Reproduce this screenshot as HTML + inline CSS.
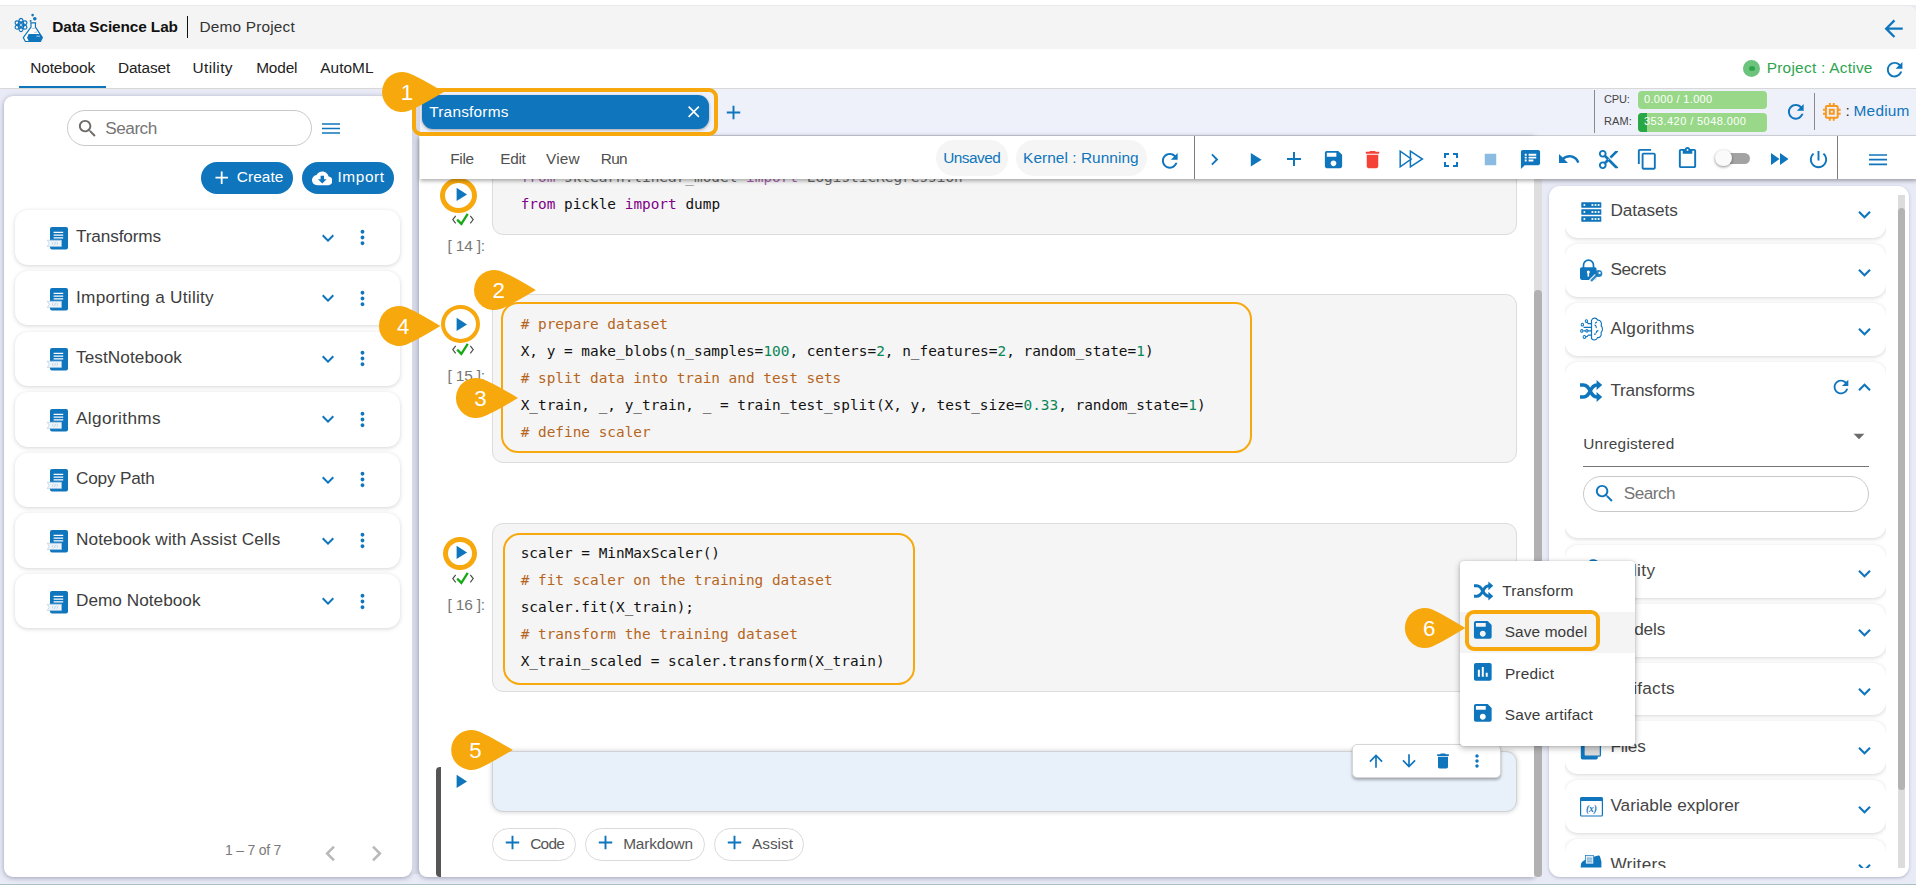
<!DOCTYPE html>
<html lang="en"><head><meta charset="utf-8"><title>Data Science Lab</title>
<style>
html,body{margin:0;padding:0}body{width:1916px;height:885px;overflow:hidden;position:relative;background:#e8eaf6;font-family:'Liberation Sans',sans-serif}
div,span,svg{box-sizing:border-box}
</style></head><body>
<div style="position:absolute;left:0px;top:0px;width:1916px;height:5px;background:#fff"></div>
<div style="position:absolute;left:0px;top:5px;width:1916px;height:44px;background:#f4f4f4;border-top:1px solid #e9e9e9;border-radius:0 7px 0 0"></div>
<svg style="position:absolute;left:14px;top:13px;overflow:visible;" width="30" height="30" viewBox="0 0 30 30"><g fill="none" stroke="#0f75bc" stroke-width="1.15"><ellipse cx="7" cy="12" rx="2.5" ry="6.6"/><ellipse cx="7" cy="12" rx="2.5" ry="6.6" transform="rotate(60 7 12)"/><ellipse cx="7" cy="12" rx="2.5" ry="6.6" transform="rotate(120 7 12)"/><circle cx="7" cy="12" r="1.5"/></g><circle cx="18.6" cy="2.1" r="1.3" fill="#0f75bc"/><circle cx="20.8" cy="5.8" r="1.8" fill="#0f75bc"/><circle cx="16.6" cy="8" r="1" fill="#0f75bc"/><path d="M16.2 9.8h6M17 9.8v4.4L9.3 24.6l2.1 3.9h15l2-3.9L21.4 14.2V9.8" fill="#fff" stroke="#0f75bc" stroke-width="1.2" stroke-linejoin="round"/><path d="M18.2 15.4h2.6M20.2 19.2h2.8" stroke="#b9c2cc" stroke-width="1"/><path d="M14.6 21.1h11.6l2.2 3.5-2 3.9H14.9l-1.8-3.7z" fill="#0f75bc"/><path d="M22.4 23.2h3.6" stroke="#9dc3e3" stroke-width="1.1"/></svg>
<span style="position:absolute;left:52.30px;top:17px;line-height:20px;white-space:pre;font-family:'Liberation Sans',sans-serif;font-size:15.4px;font-weight:700;color:#111;letter-spacing:-0.117px;">Data Science Lab</span>
<div style="position:absolute;left:187px;top:16px;width:1px;height:22px;background:#111"></div>
<span style="position:absolute;left:199.40px;top:17px;line-height:20px;white-space:pre;font-family:'Liberation Sans',sans-serif;font-size:15.4px;font-weight:400;color:#333;letter-spacing:0.197px;">Demo Project</span>
<svg style="position:absolute;left:1880.35px;top:14.65px;" width="27.3" height="27.3" viewBox="0 0 24 24"><path fill="#0f75bc" d="M20 11H7.83l5.59-5.59L12 4l-8 8 8 8 1.41-1.41L7.83 13H20v-2z"/></svg>
<div style="position:absolute;left:0px;top:49px;width:1916px;height:40px;background:#fff;border-bottom:1px solid #d8d8d8"></div>
<span style="position:absolute;left:30.30px;top:58px;line-height:20px;white-space:pre;font-family:'Liberation Sans',sans-serif;font-size:15.4px;font-weight:400;color:#222;letter-spacing:-0.149px;">Notebook</span>
<span style="position:absolute;left:117.90px;top:58px;line-height:20px;white-space:pre;font-family:'Liberation Sans',sans-serif;font-size:15.4px;font-weight:400;color:#222;letter-spacing:-0.107px;">Dataset</span>
<span style="position:absolute;left:192.60px;top:58px;line-height:20px;white-space:pre;font-family:'Liberation Sans',sans-serif;font-size:15.4px;font-weight:400;color:#222;letter-spacing:0.382px;">Utility</span>
<span style="position:absolute;left:256.20px;top:58px;line-height:20px;white-space:pre;font-family:'Liberation Sans',sans-serif;font-size:15.4px;font-weight:400;color:#222;letter-spacing:-0.164px;">Model</span>
<span style="position:absolute;left:320.30px;top:58px;line-height:20px;white-space:pre;font-family:'Liberation Sans',sans-serif;font-size:15.4px;font-weight:400;color:#222;letter-spacing:0.026px;">AutoML</span>
<div style="position:absolute;left:19px;top:86px;width:87px;height:2.4px;background:#0f75bc"></div>
<div style="position:absolute;left:1743px;top:60px;width:17px;height:17px;background:#6cc37c;border-radius:50%"></div>
<div style="position:absolute;left:1749px;top:66px;width:6px;height:5px;background:#2ea44f;border-radius:50%"></div>
<span style="position:absolute;left:1766.70px;top:58px;line-height:20px;white-space:pre;font-family:'Liberation Sans',sans-serif;font-size:15.4px;font-weight:400;color:#2da44e;letter-spacing:0.263px;">Project : Active</span>
<svg style="position:absolute;left:1882.95px;top:57.75px;" width="23.3" height="23.3" viewBox="0 0 24 24"><path fill="#0f75bc" d="M17.65 6.35C16.2 4.9 14.21 4 12 4c-4.42 0-7.99 3.58-7.99 8s3.57 8 7.99 8c3.73 0 6.84-2.55 7.73-6h-2.08c-.82 2.33-3.04 4-5.65 4-3.31 0-6-2.69-6-6s2.69-6 6-6c1.66 0 3.14.69 4.22 1.78L13 11h7V4l-2.35 2.35z"/></svg>
<div style="position:absolute;left:4px;top:96px;width:408px;height:781.3px;background:#fff;border-radius:9px;box-shadow:0 1px 5px rgba(40,44,80,.4)"></div>
<div style="position:absolute;left:67px;top:110px;width:245px;height:36px;border:1px solid #c9c9c9;border-radius:18px;background:#fff"></div>
<svg style="position:absolute;left:76.10px;top:116.80px;" width="23" height="23" viewBox="0 0 24 24"><path fill="#6f6a66" d="M15.5 14h-.79l-.28-.27C15.41 12.59 16 11.11 16 9.5 16 5.91 13.09 3 9.5 3S3 5.91 3 9.5 5.91 16 9.5 16c1.61 0 3.09-.59 4.23-1.57l.27.28v.79l5 4.99L20.49 19l-4.99-5zm-6 0C7.01 14 5 11.99 5 9.5S7.01 5 9.5 5 14 7.01 14 9.5 11.99 14 9.5 14z"/></svg>
<span style="position:absolute;left:105.30px;top:118px;line-height:20px;white-space:pre;font-family:'Liberation Sans',sans-serif;font-size:17.2px;font-weight:400;color:#757575;letter-spacing:-0.495px;">Search</span>
<svg style="position:absolute;left:321.5px;top:123.2px;overflow:visible;" width="18" height="11" viewBox="0 0 18 11"><path d="M0 1h18M0 5.5h18M0 10h18" stroke="#0f75bc" stroke-width="1.7"/></svg>
<div style="position:absolute;left:200.8px;top:162px;width:92.1px;height:32px;background:#0f75bc;border-radius:16px"></div>
<svg style="position:absolute;left:210.80px;top:167.20px;" width="21.4" height="21.4" viewBox="0 0 24 24"><path fill="#fff" d="M19 13h-6v6h-2v-6H5v-2h6V5h2v6h6v2z"/></svg>
<span style="position:absolute;left:236.80px;top:167px;line-height:20px;white-space:pre;font-family:'Liberation Sans',sans-serif;font-size:15.4px;font-weight:400;color:#fff;letter-spacing:0.083px;">Create</span>
<div style="position:absolute;left:302px;top:162px;width:92.1px;height:32px;background:#0f75bc;border-radius:16px"></div>
<svg style="position:absolute;left:311.80px;top:167.60px;" width="20.6" height="20.6" viewBox="0 0 24 24"><path fill="#fff" d="M19.35 10.04C18.67 6.59 15.64 4 12 4 9.11 4 6.6 5.64 5.35 8.04 2.34 8.36 0 10.91 0 14c0 3.31 2.69 6 6 6h13c2.76 0 5-2.24 5-5 0-2.64-2.05-4.78-4.65-4.96zM17 13l-5 5-5-5h3V9h4v4h3z"/></svg>
<span style="position:absolute;left:337.50px;top:167px;line-height:20px;white-space:pre;font-family:'Liberation Sans',sans-serif;font-size:15.4px;font-weight:400;color:#fff;letter-spacing:0.596px;">Import</span>
<div style="position:absolute;left:15px;top:210.3px;width:385px;height:54.5px;background:#fff;border-radius:13px;box-shadow:0 1px 4px rgba(0,0,0,.17)"></div>
<svg style="position:absolute;left:47px;top:226.9px;overflow:visible;" width="22" height="23" viewBox="0 0 22 23"><rect x="3" y="0" width="18" height="22.6" rx="2" fill="#0f75bc"/><path d="M6.6 5.3h9.6M6.6 8.1h9.6M6.6 10.9h9.6" stroke="#fff" stroke-width="1.25"/><path d="M0.2 13.2h14.3v6.4H0.2l2-3.2z" fill="#eef4f9" stroke="#a9cbe6" stroke-width=".6"/><path d="M6.3 15.2l-1.3 1.2 1.3 1.2M9.7 15.2l1.3 1.2-1.3 1.2M8.5 15l-1 2.8" fill="none" stroke="#9cbcd6" stroke-width=".6"/></svg>
<span style="position:absolute;left:76.00px;top:226px;line-height:20px;white-space:pre;font-family:'Liberation Sans',sans-serif;font-size:17.2px;font-weight:400;color:#3d3d3d;letter-spacing:-0.127px;">Transforms</span>
<svg style="position:absolute;left:315.50px;top:225.60px;" width="24" height="24" viewBox="0 0 24 24"><path fill="#0f75bc" d="M16.59 8.59L12 13.17 7.41 8.59 6 10l6 6 6-6z"/></svg>
<svg style="position:absolute;left:350.80px;top:226.00px;" width="23" height="23" viewBox="0 0 24 24"><path fill="#0f75bc" d="M12 8c1.1 0 2-.9 2-2s-.9-2-2-2-2 .9-2 2 .9 2 2 2zm0 2c-1.1 0-2 .9-2 2s.9 2 2 2 2-.9 2-2-.9-2-2-2zm0 6c-1.1 0-2 .9-2 2s.9 2 2 2 2-.9 2-2-.9-2-2-2z"/></svg>
<div style="position:absolute;left:15px;top:270.9px;width:385px;height:54.5px;background:#fff;border-radius:13px;box-shadow:0 1px 4px rgba(0,0,0,.17)"></div>
<svg style="position:absolute;left:47px;top:287.5px;overflow:visible;" width="22" height="23" viewBox="0 0 22 23"><rect x="3" y="0" width="18" height="22.6" rx="2" fill="#0f75bc"/><path d="M6.6 5.3h9.6M6.6 8.1h9.6M6.6 10.9h9.6" stroke="#fff" stroke-width="1.25"/><path d="M0.2 13.2h14.3v6.4H0.2l2-3.2z" fill="#eef4f9" stroke="#a9cbe6" stroke-width=".6"/><path d="M6.3 15.2l-1.3 1.2 1.3 1.2M9.7 15.2l1.3 1.2-1.3 1.2M8.5 15l-1 2.8" fill="none" stroke="#9cbcd6" stroke-width=".6"/></svg>
<span style="position:absolute;left:76.00px;top:287px;line-height:20px;white-space:pre;font-family:'Liberation Sans',sans-serif;font-size:17.2px;font-weight:400;color:#3d3d3d;letter-spacing:0.275px;">Importing a Utility</span>
<svg style="position:absolute;left:315.50px;top:286.20px;" width="24" height="24" viewBox="0 0 24 24"><path fill="#0f75bc" d="M16.59 8.59L12 13.17 7.41 8.59 6 10l6 6 6-6z"/></svg>
<svg style="position:absolute;left:350.80px;top:286.60px;" width="23" height="23" viewBox="0 0 24 24"><path fill="#0f75bc" d="M12 8c1.1 0 2-.9 2-2s-.9-2-2-2-2 .9-2 2 .9 2 2 2zm0 2c-1.1 0-2 .9-2 2s.9 2 2 2 2-.9 2-2-.9-2-2-2zm0 6c-1.1 0-2 .9-2 2s.9 2 2 2 2-.9 2-2-.9-2-2-2z"/></svg>
<div style="position:absolute;left:15px;top:331.5px;width:385px;height:54.5px;background:#fff;border-radius:13px;box-shadow:0 1px 4px rgba(0,0,0,.17)"></div>
<svg style="position:absolute;left:47px;top:348.1px;overflow:visible;" width="22" height="23" viewBox="0 0 22 23"><rect x="3" y="0" width="18" height="22.6" rx="2" fill="#0f75bc"/><path d="M6.6 5.3h9.6M6.6 8.1h9.6M6.6 10.9h9.6" stroke="#fff" stroke-width="1.25"/><path d="M0.2 13.2h14.3v6.4H0.2l2-3.2z" fill="#eef4f9" stroke="#a9cbe6" stroke-width=".6"/><path d="M6.3 15.2l-1.3 1.2 1.3 1.2M9.7 15.2l1.3 1.2-1.3 1.2M8.5 15l-1 2.8" fill="none" stroke="#9cbcd6" stroke-width=".6"/></svg>
<span style="position:absolute;left:76.00px;top:347px;line-height:20px;white-space:pre;font-family:'Liberation Sans',sans-serif;font-size:17.2px;font-weight:400;color:#3d3d3d;letter-spacing:0.074px;">TestNotebook</span>
<svg style="position:absolute;left:315.50px;top:346.80px;" width="24" height="24" viewBox="0 0 24 24"><path fill="#0f75bc" d="M16.59 8.59L12 13.17 7.41 8.59 6 10l6 6 6-6z"/></svg>
<svg style="position:absolute;left:350.80px;top:347.20px;" width="23" height="23" viewBox="0 0 24 24"><path fill="#0f75bc" d="M12 8c1.1 0 2-.9 2-2s-.9-2-2-2-2 .9-2 2 .9 2 2 2zm0 2c-1.1 0-2 .9-2 2s.9 2 2 2 2-.9 2-2-.9-2-2-2zm0 6c-1.1 0-2 .9-2 2s.9 2 2 2 2-.9 2-2-.9-2-2-2z"/></svg>
<div style="position:absolute;left:15px;top:392.1px;width:385px;height:54.5px;background:#fff;border-radius:13px;box-shadow:0 1px 4px rgba(0,0,0,.17)"></div>
<svg style="position:absolute;left:47px;top:408.7px;overflow:visible;" width="22" height="23" viewBox="0 0 22 23"><rect x="3" y="0" width="18" height="22.6" rx="2" fill="#0f75bc"/><path d="M6.6 5.3h9.6M6.6 8.1h9.6M6.6 10.9h9.6" stroke="#fff" stroke-width="1.25"/><path d="M0.2 13.2h14.3v6.4H0.2l2-3.2z" fill="#eef4f9" stroke="#a9cbe6" stroke-width=".6"/><path d="M6.3 15.2l-1.3 1.2 1.3 1.2M9.7 15.2l1.3 1.2-1.3 1.2M8.5 15l-1 2.8" fill="none" stroke="#9cbcd6" stroke-width=".6"/></svg>
<span style="position:absolute;left:76.00px;top:408px;line-height:20px;white-space:pre;font-family:'Liberation Sans',sans-serif;font-size:17.2px;font-weight:400;color:#3d3d3d;letter-spacing:0.381px;">Algorithms</span>
<svg style="position:absolute;left:315.50px;top:407.40px;" width="24" height="24" viewBox="0 0 24 24"><path fill="#0f75bc" d="M16.59 8.59L12 13.17 7.41 8.59 6 10l6 6 6-6z"/></svg>
<svg style="position:absolute;left:350.80px;top:407.80px;" width="23" height="23" viewBox="0 0 24 24"><path fill="#0f75bc" d="M12 8c1.1 0 2-.9 2-2s-.9-2-2-2-2 .9-2 2 .9 2 2 2zm0 2c-1.1 0-2 .9-2 2s.9 2 2 2 2-.9 2-2-.9-2-2-2zm0 6c-1.1 0-2 .9-2 2s.9 2 2 2 2-.9 2-2-.9-2-2-2z"/></svg>
<div style="position:absolute;left:15px;top:452.7px;width:385px;height:54.5px;background:#fff;border-radius:13px;box-shadow:0 1px 4px rgba(0,0,0,.17)"></div>
<svg style="position:absolute;left:47px;top:469.3px;overflow:visible;" width="22" height="23" viewBox="0 0 22 23"><rect x="3" y="0" width="18" height="22.6" rx="2" fill="#0f75bc"/><path d="M6.6 5.3h9.6M6.6 8.1h9.6M6.6 10.9h9.6" stroke="#fff" stroke-width="1.25"/><path d="M0.2 13.2h14.3v6.4H0.2l2-3.2z" fill="#eef4f9" stroke="#a9cbe6" stroke-width=".6"/><path d="M6.3 15.2l-1.3 1.2 1.3 1.2M9.7 15.2l1.3 1.2-1.3 1.2M8.5 15l-1 2.8" fill="none" stroke="#9cbcd6" stroke-width=".6"/></svg>
<span style="position:absolute;left:76.00px;top:468px;line-height:20px;white-space:pre;font-family:'Liberation Sans',sans-serif;font-size:17.2px;font-weight:400;color:#3d3d3d;letter-spacing:-0.196px;">Copy Path</span>
<svg style="position:absolute;left:315.50px;top:468.00px;" width="24" height="24" viewBox="0 0 24 24"><path fill="#0f75bc" d="M16.59 8.59L12 13.17 7.41 8.59 6 10l6 6 6-6z"/></svg>
<svg style="position:absolute;left:350.80px;top:468.40px;" width="23" height="23" viewBox="0 0 24 24"><path fill="#0f75bc" d="M12 8c1.1 0 2-.9 2-2s-.9-2-2-2-2 .9-2 2 .9 2 2 2zm0 2c-1.1 0-2 .9-2 2s.9 2 2 2 2-.9 2-2-.9-2-2-2zm0 6c-1.1 0-2 .9-2 2s.9 2 2 2 2-.9 2-2-.9-2-2-2z"/></svg>
<div style="position:absolute;left:15px;top:513.3px;width:385px;height:54.5px;background:#fff;border-radius:13px;box-shadow:0 1px 4px rgba(0,0,0,.17)"></div>
<svg style="position:absolute;left:47px;top:529.9px;overflow:visible;" width="22" height="23" viewBox="0 0 22 23"><rect x="3" y="0" width="18" height="22.6" rx="2" fill="#0f75bc"/><path d="M6.6 5.3h9.6M6.6 8.1h9.6M6.6 10.9h9.6" stroke="#fff" stroke-width="1.25"/><path d="M0.2 13.2h14.3v6.4H0.2l2-3.2z" fill="#eef4f9" stroke="#a9cbe6" stroke-width=".6"/><path d="M6.3 15.2l-1.3 1.2 1.3 1.2M9.7 15.2l1.3 1.2-1.3 1.2M8.5 15l-1 2.8" fill="none" stroke="#9cbcd6" stroke-width=".6"/></svg>
<span style="position:absolute;left:76.00px;top:529px;line-height:20px;white-space:pre;font-family:'Liberation Sans',sans-serif;font-size:17.2px;font-weight:400;color:#3d3d3d;letter-spacing:0.113px;">Notebook with Assist Cells</span>
<svg style="position:absolute;left:315.50px;top:528.60px;" width="24" height="24" viewBox="0 0 24 24"><path fill="#0f75bc" d="M16.59 8.59L12 13.17 7.41 8.59 6 10l6 6 6-6z"/></svg>
<svg style="position:absolute;left:350.80px;top:529.00px;" width="23" height="23" viewBox="0 0 24 24"><path fill="#0f75bc" d="M12 8c1.1 0 2-.9 2-2s-.9-2-2-2-2 .9-2 2 .9 2 2 2zm0 2c-1.1 0-2 .9-2 2s.9 2 2 2 2-.9 2-2-.9-2-2-2zm0 6c-1.1 0-2 .9-2 2s.9 2 2 2 2-.9 2-2-.9-2-2-2z"/></svg>
<div style="position:absolute;left:15px;top:573.9px;width:385px;height:54.5px;background:#fff;border-radius:13px;box-shadow:0 1px 4px rgba(0,0,0,.17)"></div>
<svg style="position:absolute;left:47px;top:590.5px;overflow:visible;" width="22" height="23" viewBox="0 0 22 23"><rect x="3" y="0" width="18" height="22.6" rx="2" fill="#0f75bc"/><path d="M6.6 5.3h9.6M6.6 8.1h9.6M6.6 10.9h9.6" stroke="#fff" stroke-width="1.25"/><path d="M0.2 13.2h14.3v6.4H0.2l2-3.2z" fill="#eef4f9" stroke="#a9cbe6" stroke-width=".6"/><path d="M6.3 15.2l-1.3 1.2 1.3 1.2M9.7 15.2l1.3 1.2-1.3 1.2M8.5 15l-1 2.8" fill="none" stroke="#9cbcd6" stroke-width=".6"/></svg>
<span style="position:absolute;left:76.00px;top:590px;line-height:20px;white-space:pre;font-family:'Liberation Sans',sans-serif;font-size:17.2px;font-weight:400;color:#3d3d3d;letter-spacing:0.023px;">Demo Notebook</span>
<svg style="position:absolute;left:315.50px;top:589.20px;" width="24" height="24" viewBox="0 0 24 24"><path fill="#0f75bc" d="M16.59 8.59L12 13.17 7.41 8.59 6 10l6 6 6-6z"/></svg>
<svg style="position:absolute;left:350.80px;top:589.60px;" width="23" height="23" viewBox="0 0 24 24"><path fill="#0f75bc" d="M12 8c1.1 0 2-.9 2-2s-.9-2-2-2-2 .9-2 2 .9 2 2 2zm0 2c-1.1 0-2 .9-2 2s.9 2 2 2 2-.9 2-2-.9-2-2-2zm0 6c-1.1 0-2 .9-2 2s.9 2 2 2 2-.9 2-2-.9-2-2-2z"/></svg>
<span style="position:absolute;left:225.00px;top:840px;line-height:20px;white-space:pre;font-family:'Liberation Sans',sans-serif;font-size:14px;font-weight:400;color:#7a7a7a;letter-spacing:-0.219px;">1 – 7 of 7</span>
<svg style="position:absolute;left:314.50px;top:837.50px;" width="31" height="31" viewBox="0 0 24 24"><path fill="#b9b9b9" d="M15.41 7.41L14 6l-6 6 6 6 1.41-1.41L10.83 12z"/></svg>
<svg style="position:absolute;left:361.10px;top:837.50px;" width="31" height="31" viewBox="0 0 24 24"><path fill="#b9b9b9" d="M10 6L8.59 7.41 13.17 12l-4.58 4.59L10 18l6-6z"/></svg>
<div style="position:absolute;left:412px;top:100px;width:7.5px;height:774px;background:#d7dae6"></div>
<div style="position:absolute;left:419.5px;top:89px;width:1497px;height:47px;background:#eef0fa;border-bottom:1px solid #d3d4da"></div>
<div style="position:absolute;left:422px;top:95px;width:287px;height:34px;background:#0f75bc;border-radius:11px;box-shadow:0 1px 3px rgba(0,0,0,.35)"></div>
<span style="position:absolute;left:429.20px;top:102px;line-height:20px;white-space:pre;font-family:'Liberation Sans',sans-serif;font-size:15.4px;font-weight:400;color:#fff;letter-spacing:0.225px;">Transforms</span>
<svg style="position:absolute;left:684.25px;top:101.95px;" width="19.5" height="19.5" viewBox="0 0 24 24"><path fill="#fff" d="M19 6.41L17.59 5 12 10.59 6.41 5 5 6.41 10.59 12 5 17.59 6.41 19 12 13.41 17.59 19 19 17.59 13.41 12z"/></svg>
<svg style="position:absolute;left:721.80px;top:101.00px;" width="23" height="23" viewBox="0 0 24 24"><path fill="#0f75bc" d="M19 13h-6v6h-2v-6H5v-2h6V5h2v6h6v2z"/></svg>
<div style="position:absolute;left:1594px;top:90px;width:1px;height:43px;background:#8a8a8a"></div>
<span style="position:absolute;left:1604.00px;top:89px;line-height:20px;white-space:pre;font-family:'Liberation Sans',sans-serif;font-size:11px;font-weight:400;color:#444;letter-spacing:-0.195px;">CPU:</span>
<span style="position:absolute;left:1604.00px;top:111px;line-height:20px;white-space:pre;font-family:'Liberation Sans',sans-serif;font-size:11px;font-weight:400;color:#444;letter-spacing:0.075px;">RAM:</span>
<div style="position:absolute;left:1638px;top:91px;width:129.3px;height:18px;background:#98d888;border-radius:4px"></div>
<div style="position:absolute;left:1638px;top:112.8px;width:129.3px;height:19px;background:#98d888;border-radius:4px;overflow:hidden"><div style="width:9px;height:19px;background:#28a745"></div></div>
<span style="position:absolute;left:1644.00px;top:89px;line-height:20px;white-space:pre;font-family:'Liberation Sans',sans-serif;font-size:11px;font-weight:400;color:#fff;letter-spacing:0.328px;">0.000 / 1.000</span>
<span style="position:absolute;left:1644.00px;top:111px;line-height:20px;white-space:pre;font-family:'Liberation Sans',sans-serif;font-size:11px;font-weight:400;color:#fff;letter-spacing:0.416px;">353.420 / 5048.000</span>
<svg style="position:absolute;left:1784.30px;top:99.80px;" width="23.6" height="23.6" viewBox="0 0 24 24"><path fill="#0f75bc" d="M17.65 6.35C16.2 4.9 14.21 4 12 4c-4.42 0-7.99 3.58-7.99 8s3.57 8 7.99 8c3.73 0 6.84-2.55 7.73-6h-2.08c-.82 2.33-3.04 4-5.65 4-3.31 0-6-2.69-6-6s2.69-6 6-6c1.66 0 3.14.69 4.22 1.78L13 11h7V4l-2.35 2.35z"/></svg>
<div style="position:absolute;left:1814px;top:93px;width:1px;height:37px;background:#8a8a8a"></div>
<svg style="position:absolute;left:1820.10px;top:99.70px;" width="23.6" height="23.6" viewBox="0 0 24 24"><path fill="#f8981d" d="M15 9H9v6h6V9zm-2 4h-2v-2h2v2zm8-2V9h-2V7c0-1.1-.9-2-2-2h-2V3h-2v2h-2V3H9v2H7c-1.1 0-2 .9-2 2v2H3v2h2v2H3v2h2v2c0 1.1.9 2 2 2h2v2h2v-2h2v2h2v-2h2c1.1 0 2-.9 2-2v-2h2v-2h-2v-2h2zm-4 6H7V7h10v10z"/></svg>
<span style="position:absolute;left:1845.60px;top:101px;line-height:20px;white-space:pre;font-family:'Liberation Sans',sans-serif;font-size:15.4px;font-weight:400;color:#333;letter-spacing:0.000px;">:</span>
<span style="position:absolute;left:1853.60px;top:101px;line-height:20px;white-space:pre;font-family:'Liberation Sans',sans-serif;font-size:15.4px;font-weight:400;color:#0f75bc;letter-spacing:0.208px;">Medium</span>
<div style="position:absolute;left:419.3px;top:136px;width:1115px;height:741.3px;background:#fff;border-radius:0 0 0 8px;box-shadow:0 1px 5px rgba(40,44,80,.4)"></div>
<div style="position:absolute;left:1534px;top:179px;width:7.5px;height:698px;background:#dedede"></div>
<div style="position:absolute;left:1534px;top:290px;width:7.5px;height:587px;background:#b1b1b1;border-radius:4px"></div>
<div style="position:absolute;left:492px;top:150px;width:1025px;height:84.5px;background:#f5f5f5;border:1px solid #dcdcdc;border-radius:11px;"></div>
<span style="position:absolute;left:520.70px;top:167px;line-height:20px;white-space:pre;font-family:'DejaVu Sans Mono','Liberation Mono',monospace;font-size:14.4px;font-weight:400;color:#800088;letter-spacing:0.000px;opacity:.62;">from</span>
<span style="position:absolute;left:555.38px;top:167px;line-height:20px;white-space:pre;font-family:'DejaVu Sans Mono','Liberation Mono',monospace;font-size:14.4px;font-weight:400;color:#111;letter-spacing:0.000px;opacity:.62;"> sklearn.linear_model </span>
<span style="position:absolute;left:746.11px;top:167px;line-height:20px;white-space:pre;font-family:'DejaVu Sans Mono','Liberation Mono',monospace;font-size:14.4px;font-weight:400;color:#800088;letter-spacing:0.000px;opacity:.62;">import</span>
<span style="position:absolute;left:798.12px;top:167px;line-height:20px;white-space:pre;font-family:'DejaVu Sans Mono','Liberation Mono',monospace;font-size:14.4px;font-weight:400;color:#111;letter-spacing:0.000px;opacity:.62;"> LogisticRegression</span>
<span style="position:absolute;left:520.70px;top:194px;line-height:20px;white-space:pre;font-family:'DejaVu Sans Mono','Liberation Mono',monospace;font-size:14.4px;font-weight:400;color:#800088;letter-spacing:0.000px;">from</span>
<span style="position:absolute;left:555.38px;top:194px;line-height:20px;white-space:pre;font-family:'DejaVu Sans Mono','Liberation Mono',monospace;font-size:14.4px;font-weight:400;color:#111;letter-spacing:0.000px;"> pickle </span>
<span style="position:absolute;left:624.73px;top:194px;line-height:20px;white-space:pre;font-family:'DejaVu Sans Mono','Liberation Mono',monospace;font-size:14.4px;font-weight:400;color:#800088;letter-spacing:0.000px;">import</span>
<span style="position:absolute;left:676.75px;top:194px;line-height:20px;white-space:pre;font-family:'DejaVu Sans Mono','Liberation Mono',monospace;font-size:14.4px;font-weight:400;color:#111;letter-spacing:0.000px;"> dump</span>
<div style="position:absolute;left:440.05px;top:178.1px;width:36.9px;height:34.8px;border:5.2px solid #f7a80d;border-radius:50%;background:#fff"></div>
<svg style="position:absolute;left:449.10px;top:183.10px;" width="22.8" height="22.8" viewBox="0 0 24 24"><path fill="#0f75bc" d="M8 5v14l11-7z"/></svg>
<svg style="position:absolute;left:451px;top:212.3px;overflow:visible;" width="24" height="14.6" viewBox="0 0 24 16"><path d="M4 4.2L0.8 8.3l3.2 4.1M20 4.2L23.2 8.3l-3.2 4.1" fill="none" stroke="#4a4a4a" stroke-width="1.25"/><path d="M5.6 8.4l4.6 4.6 7-11" fill="none" stroke="#17a817" stroke-width="2.5"/></svg>
<span style="position:absolute;left:447.60px;top:236px;line-height:20px;white-space:pre;font-family:'Liberation Sans',sans-serif;font-size:15.4px;font-weight:400;color:#767676;letter-spacing:-0.171px;">[ 14 ]:</span>
<div style="position:absolute;left:492px;top:294.3px;width:1025px;height:169px;background:#f5f5f5;border:1px solid #dcdcdc;border-radius:11px;"></div>
<div style="position:absolute;left:501px;top:302px;width:750.5px;height:150.5px;border:2.4px solid #f7a80d;border-radius:17px"></div>
<span style="position:absolute;left:520.70px;top:314px;line-height:20px;white-space:pre;font-family:'DejaVu Sans Mono','Liberation Mono',monospace;font-size:14.4px;font-weight:400;color:#b5651d;letter-spacing:0.000px;"># prepare dataset</span>
<span style="position:absolute;left:520.70px;top:341px;line-height:20px;white-space:pre;font-family:'DejaVu Sans Mono','Liberation Mono',monospace;font-size:14.4px;font-weight:400;color:#111;letter-spacing:0.000px;">X, y = make_blobs(n_samples=</span>
<span style="position:absolute;left:763.45px;top:341px;line-height:20px;white-space:pre;font-family:'DejaVu Sans Mono','Liberation Mono',monospace;font-size:14.4px;font-weight:400;color:#098658;letter-spacing:0.000px;">100</span>
<span style="position:absolute;left:789.45px;top:341px;line-height:20px;white-space:pre;font-family:'DejaVu Sans Mono','Liberation Mono',monospace;font-size:14.4px;font-weight:400;color:#111;letter-spacing:0.000px;">, centers=</span>
<span style="position:absolute;left:876.15px;top:341px;line-height:20px;white-space:pre;font-family:'DejaVu Sans Mono','Liberation Mono',monospace;font-size:14.4px;font-weight:400;color:#098658;letter-spacing:0.000px;">2</span>
<span style="position:absolute;left:884.82px;top:341px;line-height:20px;white-space:pre;font-family:'DejaVu Sans Mono','Liberation Mono',monospace;font-size:14.4px;font-weight:400;color:#111;letter-spacing:0.000px;">, n_features=</span>
<span style="position:absolute;left:997.52px;top:341px;line-height:20px;white-space:pre;font-family:'DejaVu Sans Mono','Liberation Mono',monospace;font-size:14.4px;font-weight:400;color:#098658;letter-spacing:0.000px;">2</span>
<span style="position:absolute;left:1006.19px;top:341px;line-height:20px;white-space:pre;font-family:'DejaVu Sans Mono','Liberation Mono',monospace;font-size:14.4px;font-weight:400;color:#111;letter-spacing:0.000px;">, random_state=</span>
<span style="position:absolute;left:1136.23px;top:341px;line-height:20px;white-space:pre;font-family:'DejaVu Sans Mono','Liberation Mono',monospace;font-size:14.4px;font-weight:400;color:#098658;letter-spacing:0.000px;">1</span>
<span style="position:absolute;left:1144.90px;top:341px;line-height:20px;white-space:pre;font-family:'DejaVu Sans Mono','Liberation Mono',monospace;font-size:14.4px;font-weight:400;color:#111;letter-spacing:0.000px;">)</span>
<span style="position:absolute;left:520.70px;top:368px;line-height:20px;white-space:pre;font-family:'DejaVu Sans Mono','Liberation Mono',monospace;font-size:14.4px;font-weight:400;color:#b5651d;letter-spacing:0.000px;"># split data into train and test sets</span>
<span style="position:absolute;left:520.70px;top:395px;line-height:20px;white-space:pre;font-family:'DejaVu Sans Mono','Liberation Mono',monospace;font-size:14.4px;font-weight:400;color:#111;letter-spacing:0.000px;">X_train, _, y_train, _ = train_test_split(X, y, test_size=</span>
<span style="position:absolute;left:1023.53px;top:395px;line-height:20px;white-space:pre;font-family:'DejaVu Sans Mono','Liberation Mono',monospace;font-size:14.4px;font-weight:400;color:#098658;letter-spacing:0.000px;">0.33</span>
<span style="position:absolute;left:1058.21px;top:395px;line-height:20px;white-space:pre;font-family:'DejaVu Sans Mono','Liberation Mono',monospace;font-size:14.4px;font-weight:400;color:#111;letter-spacing:0.000px;">, random_state=</span>
<span style="position:absolute;left:1188.25px;top:395px;line-height:20px;white-space:pre;font-family:'DejaVu Sans Mono','Liberation Mono',monospace;font-size:14.4px;font-weight:400;color:#098658;letter-spacing:0.000px;">1</span>
<span style="position:absolute;left:1196.92px;top:395px;line-height:20px;white-space:pre;font-family:'DejaVu Sans Mono','Liberation Mono',monospace;font-size:14.4px;font-weight:400;color:#111;letter-spacing:0.000px;">)</span>
<span style="position:absolute;left:520.70px;top:422px;line-height:20px;white-space:pre;font-family:'DejaVu Sans Mono','Liberation Mono',monospace;font-size:14.4px;font-weight:400;color:#b5651d;letter-spacing:0.000px;"># define scaler</span>
<div style="position:absolute;left:441.1px;top:305.05px;width:38.8px;height:37.9px;border:4.8px solid #f7a80d;border-radius:50%;background:#fff"></div>
<svg style="position:absolute;left:449.10px;top:313.10px;" width="22.8" height="22.8" viewBox="0 0 24 24"><path fill="#0f75bc" d="M8 5v14l11-7z"/></svg>
<svg style="position:absolute;left:451px;top:342.1px;overflow:visible;" width="24" height="14.6" viewBox="0 0 24 16"><path d="M4 4.2L0.8 8.3l3.2 4.1M20 4.2L23.2 8.3l-3.2 4.1" fill="none" stroke="#4a4a4a" stroke-width="1.25"/><path d="M5.6 8.4l4.6 4.6 7-11" fill="none" stroke="#17a817" stroke-width="2.5"/></svg>
<span style="position:absolute;left:447.60px;top:366px;line-height:20px;white-space:pre;font-family:'Liberation Sans',sans-serif;font-size:15.4px;font-weight:400;color:#767676;letter-spacing:-0.171px;">[ 15 ]:</span>
<div style="position:absolute;left:492px;top:523.3px;width:1025px;height:169px;background:#f5f5f5;border:1px solid #dcdcdc;border-radius:11px;"></div>
<div style="position:absolute;left:503px;top:533px;width:411.5px;height:152px;border:2.4px solid #f7a80d;border-radius:17px"></div>
<span style="position:absolute;left:520.70px;top:543px;line-height:20px;white-space:pre;font-family:'DejaVu Sans Mono','Liberation Mono',monospace;font-size:14.4px;font-weight:400;color:#111;letter-spacing:0.000px;">scaler = MinMaxScaler()</span>
<span style="position:absolute;left:520.70px;top:570px;line-height:20px;white-space:pre;font-family:'DejaVu Sans Mono','Liberation Mono',monospace;font-size:14.4px;font-weight:400;color:#b5651d;letter-spacing:0.000px;"># fit scaler on the training dataset</span>
<span style="position:absolute;left:520.70px;top:597px;line-height:20px;white-space:pre;font-family:'DejaVu Sans Mono','Liberation Mono',monospace;font-size:14.4px;font-weight:400;color:#111;letter-spacing:0.000px;">scaler.fit(X_train);</span>
<span style="position:absolute;left:520.70px;top:624px;line-height:20px;white-space:pre;font-family:'DejaVu Sans Mono','Liberation Mono',monospace;font-size:14.4px;font-weight:400;color:#b5651d;letter-spacing:0.000px;"># transform the training dataset</span>
<span style="position:absolute;left:520.70px;top:651px;line-height:20px;white-space:pre;font-family:'DejaVu Sans Mono','Liberation Mono',monospace;font-size:14.4px;font-weight:400;color:#111;letter-spacing:0.000px;">X_train_scaled = scaler.transform(X_train)</span>
<div style="position:absolute;left:443.1px;top:536.85px;width:33.9px;height:33.1px;border:5.0px solid #f7a80d;border-radius:50%;background:#fff"></div>
<svg style="position:absolute;left:449.10px;top:541.10px;" width="22.8" height="22.8" viewBox="0 0 24 24"><path fill="#0f75bc" d="M8 5v14l11-7z"/></svg>
<svg style="position:absolute;left:451px;top:571.0999999999999px;overflow:visible;" width="24" height="14.6" viewBox="0 0 24 16"><path d="M4 4.2L0.8 8.3l3.2 4.1M20 4.2L23.2 8.3l-3.2 4.1" fill="none" stroke="#4a4a4a" stroke-width="1.25"/><path d="M5.6 8.4l4.6 4.6 7-11" fill="none" stroke="#17a817" stroke-width="2.5"/></svg>
<span style="position:absolute;left:447.60px;top:595px;line-height:20px;white-space:pre;font-family:'Liberation Sans',sans-serif;font-size:15.4px;font-weight:400;color:#767676;letter-spacing:-0.171px;">[ 16 ]:</span>
<div style="position:absolute;left:436.2px;top:767px;width:4.8px;height:110.3px;background:#555;border-radius:4px 0 0 4px"></div>
<div style="position:absolute;left:492px;top:751.3px;width:1025px;height:60.5px;background:#e8f0fa;border:1px solid #dcdcdc;border-radius:11px;box-shadow:0 0 5px rgba(0,0,0,.2);border-color:#cfd3d8"></div>
<svg style="position:absolute;left:449.10px;top:770.20px;" width="22.8" height="22.8" viewBox="0 0 24 24"><path fill="#0f75bc" d="M8 5v14l11-7z"/></svg>
<div style="position:absolute;left:1352.3px;top:744px;width:148.4px;height:33.6px;background:#fff;border:1px solid #d6d6d6;border-radius:5px;box-shadow:0 2px 3px rgba(0,0,0,.3)"></div>
<svg style="position:absolute;left:1366.00px;top:751.00px;" width="20" height="20" viewBox="0 0 24 24"><path fill="#0f75bc" d="M4 12l1.41 1.41L11 7.83V20h2V7.83l5.58 5.59L20 12l-8-8-8 8z"/></svg>
<svg style="position:absolute;left:1399.30px;top:751.00px;" width="20" height="20" viewBox="0 0 24 24"><path fill="#0f75bc" d="M20 12l-1.41-1.41L13 16.17V4h-2v12.17l-5.58-5.59L4 12l8 8 8-8z"/></svg>
<svg style="position:absolute;left:1433.00px;top:751.00px;" width="20" height="20" viewBox="0 0 24 24"><path fill="#0f75bc" d="M6 19c0 1.1.9 2 2 2h8c1.1 0 2-.9 2-2V7H6v12zM19 4h-3.5l-1-1h-5l-1 1H5v2h14V4z"/></svg>
<svg style="position:absolute;left:1466.70px;top:751.00px;" width="20" height="20" viewBox="0 0 24 24"><path fill="#0f75bc" d="M12 8c1.1 0 2-.9 2-2s-.9-2-2-2-2 .9-2 2 .9 2 2 2zm0 2c-1.1 0-2 .9-2 2s.9 2 2 2 2-.9 2-2-.9-2-2-2zm0 6c-1.1 0-2 .9-2 2s.9 2 2 2 2-.9 2-2-.9-2-2-2z"/></svg>
<div style="position:absolute;left:492px;top:828px;width:84px;height:32.5px;border:1px solid #dadada;border-radius:16.5px;background:#fff"></div>
<svg style="position:absolute;left:501.10px;top:831.10px;" width="23" height="23" viewBox="0 0 24 24"><path fill="#0f75bc" d="M19 13h-6v6h-2v-6H5v-2h6V5h2v6h6v2z"/></svg>
<span style="position:absolute;left:530.20px;top:834px;line-height:20px;white-space:pre;font-family:'Liberation Sans',sans-serif;font-size:15.4px;font-weight:400;color:#555;letter-spacing:-0.724px;">Code</span>
<div style="position:absolute;left:585px;top:828px;width:120px;height:32.5px;border:1px solid #dadada;border-radius:16.5px;background:#fff"></div>
<svg style="position:absolute;left:594.10px;top:831.10px;" width="23" height="23" viewBox="0 0 24 24"><path fill="#0f75bc" d="M19 13h-6v6h-2v-6H5v-2h6V5h2v6h6v2z"/></svg>
<span style="position:absolute;left:623.20px;top:834px;line-height:20px;white-space:pre;font-family:'Liberation Sans',sans-serif;font-size:15.4px;font-weight:400;color:#555;letter-spacing:-0.150px;">Markdown</span>
<div style="position:absolute;left:714.2px;top:828px;width:90px;height:32.5px;border:1px solid #dadada;border-radius:16.5px;background:#fff"></div>
<svg style="position:absolute;left:723.30px;top:831.10px;" width="23" height="23" viewBox="0 0 24 24"><path fill="#0f75bc" d="M19 13h-6v6h-2v-6H5v-2h6V5h2v6h6v2z"/></svg>
<span style="position:absolute;left:752.00px;top:834px;line-height:20px;white-space:pre;font-family:'Liberation Sans',sans-serif;font-size:15.4px;font-weight:400;color:#555;letter-spacing:-0.024px;">Assist</span>
<div style="position:absolute;left:419.5px;top:136px;width:1497px;height:43.3px;background:#fff;box-shadow:0 2px 4px rgba(0,0,0,.32)"></div>
<span style="position:absolute;left:450.20px;top:149px;line-height:20px;white-space:pre;font-family:'Liberation Sans',sans-serif;font-size:15.4px;font-weight:400;color:#505050;letter-spacing:-0.303px;">File</span>
<span style="position:absolute;left:500.20px;top:149px;line-height:20px;white-space:pre;font-family:'Liberation Sans',sans-serif;font-size:15.4px;font-weight:400;color:#505050;letter-spacing:-0.308px;">Edit</span>
<span style="position:absolute;left:546.00px;top:149px;line-height:20px;white-space:pre;font-family:'Liberation Sans',sans-serif;font-size:15.4px;font-weight:400;color:#505050;letter-spacing:0.177px;">View</span>
<span style="position:absolute;left:600.80px;top:149px;line-height:20px;white-space:pre;font-family:'Liberation Sans',sans-serif;font-size:15.4px;font-weight:400;color:#505050;letter-spacing:-0.678px;">Run</span>
<div style="position:absolute;left:936px;top:140px;width:71.5px;height:36px;background:#f5f5f5;border-radius:18px"></div>
<span style="position:absolute;left:943.20px;top:148px;line-height:20px;white-space:pre;font-family:'Liberation Sans',sans-serif;font-size:15.4px;font-weight:400;color:#0f75bc;letter-spacing:-0.536px;">Unsaved</span>
<div style="position:absolute;left:1016px;top:140px;width:130.5px;height:36px;background:#f5f5f5;border-radius:18px"></div>
<span style="position:absolute;left:1023.10px;top:148px;line-height:20px;white-space:pre;font-family:'Liberation Sans',sans-serif;font-size:15.4px;font-weight:400;color:#0f75bc;letter-spacing:0.059px;">Kernel : Running</span>
<svg style="position:absolute;left:1158.30px;top:148.50px;" width="23.6" height="23.6" viewBox="0 0 24 24"><path fill="#0f75bc" d="M17.65 6.35C16.2 4.9 14.21 4 12 4c-4.42 0-7.99 3.58-7.99 8s3.57 8 7.99 8c3.73 0 6.84-2.55 7.73-6h-2.08c-.82 2.33-3.04 4-5.65 4-3.31 0-6-2.69-6-6s2.69-6 6-6c1.66 0 3.14.69 4.22 1.78L13 11h7V4l-2.35 2.35z"/></svg>
<div style="position:absolute;left:1194px;top:136px;width:1px;height:43.3px;background:#7d7d7d"></div>
<div style="position:absolute;left:1837px;top:136px;width:1px;height:43.3px;background:#7d7d7d"></div>
<svg style="position:absolute;left:1203.30px;top:147.80px;" width="23" height="23" viewBox="0 0 24 24"><path fill="#0f75bc" d="M10 6L8.59 7.41 13.17 12l-4.58 4.59L10 18l6-6z"/></svg>
<svg style="position:absolute;left:1243.25px;top:147.55px;" width="23.5" height="23.5" viewBox="0 0 24 24"><path fill="#0f75bc" d="M8 5v14l11-7z"/></svg>
<svg style="position:absolute;left:1281.80px;top:147.30px;" width="24" height="24" viewBox="0 0 24 24"><path fill="#0f75bc" d="M19 13h-6v6h-2v-6H5v-2h6V5h2v6h6v2z"/></svg>
<svg style="position:absolute;left:1321.50px;top:147.80px;" width="23" height="23" viewBox="0 0 24 24"><path fill="#0f75bc" d="M17 3H5c-1.11 0-2 .9-2 2v14c0 1.1.89 2 2 2h14c1.1 0 2-.9 2-2V7l-4-4zm-5 16c-1.66 0-3-1.34-3-3s1.34-3 3-3 3 1.34 3 3-1.34 3-3 3zm3-10H5V5h10v4z"/></svg>
<svg style="position:absolute;left:1361.00px;top:147.80px;" width="23" height="23" viewBox="0 0 24 24"><path fill="#f44336" d="M6 19c0 1.1.9 2 2 2h8c1.1 0 2-.9 2-2V7H6v12zM19 4h-3.5l-1-1h-5l-1 1H5v2h14V4z"/></svg>
<svg style="position:absolute;left:1399px;top:149px;overflow:visible;" width="25" height="20" viewBox="0 0 25 20"><path d="M1.2 2.2v15.6L12.2 10zM11.4 2.2v15.6L23.4 10z" fill="#fff" stroke="#0f75bc" stroke-width="1.5" stroke-linejoin="miter"/></svg>
<svg style="position:absolute;left:1439.30px;top:147.60px;" width="24" height="24" viewBox="0 0 24 24"><path fill="#0f75bc" d="M7 14H5v5h5v-2H7v-3zm-2-4h2V7h3V5H5v5zm12 7h-3v2h5v-5h-2v3zM14 5v2h3v3h2V5h-5z"/></svg>
<svg style="position:absolute;left:1478.80px;top:147.80px;" width="23" height="23" viewBox="0 0 24 24"><path fill="#8bbbe0" d="M6 6h12v12H6z"/></svg>
<svg style="position:absolute;left:1518.50px;top:147.80px;" width="23" height="23" viewBox="0 0 24 24"><path fill="#0f75bc" d="M20 2H4c-1.1 0-1.99.9-1.99 2L2 22l4-4h14c1.1 0 2-.9 2-2V4c0-1.1-.9-2-2-2zM8 14H6v-2h2v2zm0-3H6V9h2v2zm0-3H6V6h2v2zm7 6h-5v-2h5v2zm3-3h-8V9h8v2zm0-3h-8V6h8v2z"/></svg>
<svg style="position:absolute;left:1557.00px;top:147.30px;" width="24" height="24" viewBox="0 0 24 24"><path fill="#0f75bc" d="M12.5 8c-2.65 0-5.05.99-6.9 2.6L2 7v9h9l-3.62-3.62c1.39-1.16 3.16-1.88 5.12-1.88 3.54 0 6.55 2.31 7.6 5.5l2.37-.78C21.08 11.03 17.15 8 12.5 8z"/></svg>
<svg style="position:absolute;left:1597.20px;top:147.80px;" width="23" height="23" viewBox="0 0 24 24"><path fill="#0f75bc" d="M9.64 7.64c.23-.5.36-1.05.36-1.64 0-2.21-1.79-4-4-4S2 3.79 2 6s1.79 4 4 4c.59 0 1.14-.13 1.64-.36L10 12l-2.36 2.36C7.14 14.13 6.59 14 6 14c-2.21 0-4 1.79-4 4s1.79 4 4 4 4-1.79 4-4c0-.59-.13-1.14-.36-1.64L12 14l7 7h3v-1L9.64 7.64zM6 8c-1.1 0-2-.89-2-2s.9-2 2-2 2 .89 2 2-.9 2-2 2zm0 12c-1.1 0-2-.89-2-2s.9-2 2-2 2 .89 2 2-.9 2-2 2zm6-7.5c-.28 0-.5-.22-.5-.5s.22-.5.5-.5.5.22.5.5-.22.5-.5.5zM19 3l-6 6 2 2 7-7V3z"/></svg>
<svg style="position:absolute;left:1636.30px;top:148.10px;" width="22.6" height="22.6" viewBox="0 0 24 24"><path fill="#0f75bc" d="M16 1H4c-1.1 0-2 .9-2 2v14h2V3h12V1zm3 4H8c-1.1 0-2 .9-2 2v14c0 1.1.9 2 2 2h11c1.1 0 2-.9 2-2V7c0-1.1-.9-2-2-2zm0 16H8V7h11v14z"/></svg>
<svg style="position:absolute;left:1675.50px;top:147.20px;" width="23" height="23" viewBox="0 0 24 24"><path fill="#0f75bc" d="M19 2h-4.18C14.4.84 13.3 0 12 0c-1.3 0-2.4.84-2.82 2H5c-1.1 0-2 .9-2 2v16c0 1.1.9 2 2 2h14c1.1 0 2-.9 2-2V4c0-1.1-.9-2-2-2zm-7 0c.55 0 1 .45 1 1s-.45 1-1 1-1-.45-1-1 .45-1 1-1zm7 18H5V4h2v3h10V4h2v16z"/></svg>
<div style="position:absolute;left:1722px;top:153.4px;width:28px;height:10.3px;background:#a3a3a3;border-radius:6px"></div>
<div style="position:absolute;left:1715.3px;top:149.8px;width:16.4px;height:16.4px;background:#fafafa;border-radius:50%;box-shadow:0 1px 3px rgba(0,0,0,.45)"></div>
<svg style="position:absolute;left:1767.00px;top:147.30px;" width="24" height="24" viewBox="0 0 24 24"><path fill="#0f75bc" d="M4 18l8.5-6L4 6v12zm9-12v12l8.5-6L13 6z"/></svg>
<svg style="position:absolute;left:1806.80px;top:147.50px;" width="23" height="23" viewBox="0 0 24 24"><path fill="#0f75bc" d="M13 3h-2v10h2V3zm4.83 2.17l-1.42 1.42C17.99 7.86 19 9.81 19 12c0 3.87-3.13 7-7 7s-7-3.13-7-7c0-2.19 1.01-4.14 2.58-5.42L6.17 5.17C4.23 6.82 3 9.26 3 12c0 4.97 4.03 9 9 9s9-4.03 9-9c0-2.74-1.23-5.18-3.17-6.83z"/></svg>
<svg style="position:absolute;left:1868.7px;top:153.6px;overflow:visible;" width="18" height="11.4" viewBox="0 0 18 11.4"><path d="M0 1h18M0 5.7h18M0 10.4h18" stroke="#0f75bc" stroke-width="1.7"/></svg>
<div style="position:absolute;left:1549px;top:186px;width:360px;height:691px;background:#fff;border-radius:11px;box-shadow:0 1px 3px rgba(60,64,100,.3)"></div>
<div style="position:absolute;left:1565px;top:195px;width:321px;height:673px;overflow:hidden;padding:0"><div style="position:absolute;left:0;top:0;width:321px;height:673px"><div style="position:absolute;left:0;top:-9.9px;width:321px;height:52.8px;background:#fff;border-radius:13px;box-shadow:0 1px 4px rgba(0,0,0,.17)"></div><span style="position:absolute;left:45.40px;top:5px;line-height:20px;white-space:pre;font-family:'Liberation Sans',sans-serif;font-size:17.2px;font-weight:400;color:#454545;letter-spacing:-0.066px;">Datasets</span><svg style="position:absolute;left:15.8px;top:6.400000000000006px;overflow:visible;" width="23" height="23" viewBox="0 0 23 23"><rect x="0.3" y="1.2" width="20" height="5.6" rx=".6" fill="#0f75bc"/><rect x="10.5" y="3.0999999999999996" width="1.8" height="1.8" fill="#fff"/><rect x="13.6" y="3.0999999999999996" width="1.8" height="1.8" fill="#fff"/><rect x="16.7" y="3.0999999999999996" width="1.8" height="1.8" fill="#fff"/><circle cx="3.4" cy="4.0" r="1" fill="#fff"/><rect x="0.3" y="8.2" width="20" height="5.6" rx=".6" fill="#0f75bc"/><rect x="10.5" y="10.1" width="1.8" height="1.8" fill="#fff"/><rect x="13.6" y="10.1" width="1.8" height="1.8" fill="#fff"/><rect x="16.7" y="10.1" width="1.8" height="1.8" fill="#fff"/><circle cx="3.4" cy="11.0" r="1" fill="#fff"/><rect x="0.3" y="15.2" width="20" height="5.6" rx=".6" fill="#0f75bc"/><rect x="10.5" y="17.099999999999998" width="1.8" height="1.8" fill="#fff"/><rect x="13.6" y="17.099999999999998" width="1.8" height="1.8" fill="#fff"/><rect x="16.7" y="17.099999999999998" width="1.8" height="1.8" fill="#fff"/><circle cx="3.4" cy="18.0" r="1" fill="#fff"/></svg><svg style="position:absolute;left:286.80px;top:6.50px;" width="25" height="25" viewBox="0 0 24 24"><path fill="#0f75bc" d="M16.59 8.59L12 13.17 7.41 8.59 6 10l6 6 6-6z"/></svg><div style="position:absolute;left:0;top:49.0px;width:321px;height:52.8px;background:#fff;border-radius:13px;box-shadow:0 1px 4px rgba(0,0,0,.17)"></div><span style="position:absolute;left:45.40px;top:64px;line-height:20px;white-space:pre;font-family:'Liberation Sans',sans-serif;font-size:17.2px;font-weight:400;color:#454545;letter-spacing:-0.397px;">Secrets</span><svg style="position:absolute;left:15px;top:63.60000000000002px;overflow:visible;" width="23" height="23" viewBox="0 0 23 23"><path d="M3.5 9V6.2a5 5 0 0 1 10 0V9" fill="none" stroke="#0f75bc" stroke-width="1.7"/><rect x="0" y="8.3" width="16.6" height="12.6" rx="1.8" fill="#0f75bc"/><circle cx="8.3" cy="13" r="1.5" fill="#fff"/><rect x="7.5" y="13" width="1.6" height="4.6" fill="#fff"/><path d="M10.6 22.4l6.2-6.2" stroke="#fff" stroke-width="4.4"/><path d="M11 22l6.4-6.4" stroke="#0f75bc" stroke-width="2.4" opacity=".85"/><circle cx="18.8" cy="14.6" r="3.5" fill="#0f75bc" opacity=".9"/><circle cx="19.6" cy="13.9" r="1.1" fill="#fff"/></svg><svg style="position:absolute;left:286.80px;top:65.40px;" width="25" height="25" viewBox="0 0 24 24"><path fill="#0f75bc" d="M16.59 8.59L12 13.17 7.41 8.59 6 10l6 6 6-6z"/></svg><div style="position:absolute;left:0;top:107.9px;width:321px;height:52.8px;background:#fff;border-radius:13px;box-shadow:0 1px 4px rgba(0,0,0,.17)"></div><span style="position:absolute;left:45.40px;top:123px;line-height:20px;white-space:pre;font-family:'Liberation Sans',sans-serif;font-size:17.2px;font-weight:400;color:#454545;letter-spacing:0.301px;">Algorithms</span><svg style="position:absolute;left:15px;top:122.89999999999998px;overflow:visible;" width="23" height="23" viewBox="0 0 23 23"><g transform="translate(0,-1.2) scale(1,1.12)"><g fill="none" stroke="#0f75bc" stroke-width="1.1"><path d="M11.5 3.2c1-2.4 4.8-2.8 6.2-.2 2.8-.2 4.6 2.6 3.4 5 1.8 1.6 1.8 4.6 0 6 .8 2.6-1.2 5-3.6 4.6-1 2.6-5 2.8-6 .6z"/><path d="M11.5 3v17"/><path d="M14.5 7.5c1.6 0 2 1.4 1.6 2.6M18.4 12.4c-1.4 0-2.2.8-2.2 2.2M14 15.5h1.8M15 5.2c.8.4 1.4 0 1.8-.8"/><path d="M11.5 6H8.2L7 4.8H6.6M11.5 9.4H3.6M11.5 12.6H7.6M6.2 12.6H3.4M11.5 16.4H8.4L7 17.8H5"/></g><g fill="#fff" stroke="#0f75bc" stroke-width="1"><circle cx="6.4" cy="3.8" r="1.2"/><circle cx="2.4" cy="7" r="1.2"/><circle cx="1.8" cy="12.6" r="1.2"/><circle cx="6.9" cy="12.6" r="1.1"/><circle cx="4.4" cy="18" r="1.3"/></g></g></svg><svg style="position:absolute;left:286.80px;top:124.30px;" width="25" height="25" viewBox="0 0 24 24"><path fill="#0f75bc" d="M16.59 8.59L12 13.17 7.41 8.59 6 10l6 6 6-6z"/></svg><div style="position:absolute;left:0;top:166.7px;width:321px;height:176.8px;background:#fff;border-radius:13px;box-shadow:0 1px 4px rgba(0,0,0,.17)"></div><span style="position:absolute;left:45.40px;top:185px;line-height:20px;white-space:pre;font-family:'Liberation Sans',sans-serif;font-size:17.2px;font-weight:400;color:#454545;letter-spacing:-0.207px;">Transforms</span><svg style="position:absolute;left:15.4px;top:185.3px;overflow:visible;" width="22" height="22" viewBox="0 0 22 22"><g fill="none" stroke="#0f75bc" stroke-width="3.4"><path d="M0 5h3.2c3.6 0 5 2 7 6s3.4 6 7 6h1.6"/><path d="M0 17h3.2c3.6 0 5-2 7-6s3.4-6 7-6h1.6"/></g><path d="M16.6 0l5.6 5-5.6 5zM16.6 12l5.6 5-5.6 5z" fill="#0f75bc"/></svg><svg style="position:absolute;left:264.90px;top:181.20px;" width="22" height="22" viewBox="0 0 24 24"><path fill="#0f75bc" d="M17.65 6.35C16.2 4.9 14.21 4 12 4c-4.42 0-7.99 3.58-7.99 8s3.57 8 7.99 8c3.73 0 6.84-2.55 7.73-6h-2.08c-.82 2.33-3.04 4-5.65 4-3.31 0-6-2.69-6-6s2.69-6 6-6c1.66 0 3.14.69 4.22 1.78L13 11h7V4l-2.35 2.35z"/></svg><svg style="position:absolute;left:286.80px;top:180.20px;" width="25" height="25" viewBox="0 0 24 24"><path fill="#0f75bc" d="M12 8l-6 6 1.41 1.41L12 10.83l4.59 4.58L18 14z"/></svg><div style="position:absolute;left:0;top:350.0px;width:321px;height:52.8px;background:#fff;border-radius:13px;box-shadow:0 1px 4px rgba(0,0,0,.17)"></div><span style="position:absolute;left:45.40px;top:365px;line-height:20px;white-space:pre;font-family:'Liberation Sans',sans-serif;font-size:17.2px;font-weight:400;color:#454545;letter-spacing:0.441px;">Utility</span><svg style="position:absolute;left:15px;top:365px;overflow:visible;" width="23" height="23" viewBox="0 0 23 23"><path d="M10 1.2c2.4-1.4 5.6-1 7.4 1" fill="none" stroke="#0f75bc" stroke-width="2.4"/><rect x="2" y="6" width="19" height="15" rx="2" fill="#0f75bc"/></svg><svg style="position:absolute;left:286.80px;top:366.40px;" width="25" height="25" viewBox="0 0 24 24"><path fill="#0f75bc" d="M16.59 8.59L12 13.17 7.41 8.59 6 10l6 6 6-6z"/></svg><div style="position:absolute;left:0;top:408.9px;width:321px;height:52.8px;background:#fff;border-radius:13px;box-shadow:0 1px 4px rgba(0,0,0,.17)"></div><span style="position:absolute;left:45.40px;top:424px;line-height:20px;white-space:pre;font-family:'Liberation Sans',sans-serif;font-size:17.2px;font-weight:400;color:#454545;letter-spacing:-0.068px;">Models</span><svg style="position:absolute;left:286.80px;top:425.30px;" width="25" height="25" viewBox="0 0 24 24"><path fill="#0f75bc" d="M16.59 8.59L12 13.17 7.41 8.59 6 10l6 6 6-6z"/></svg><div style="position:absolute;left:0;top:467.6px;width:321px;height:52.8px;background:#fff;border-radius:13px;box-shadow:0 1px 4px rgba(0,0,0,.17)"></div><span style="position:absolute;left:45.40px;top:483px;line-height:20px;white-space:pre;font-family:'Liberation Sans',sans-serif;font-size:17.2px;font-weight:400;color:#454545;letter-spacing:0.258px;">Artifacts</span><svg style="position:absolute;left:286.80px;top:484.00px;" width="25" height="25" viewBox="0 0 24 24"><path fill="#0f75bc" d="M16.59 8.59L12 13.17 7.41 8.59 6 10l6 6 6-6z"/></svg><div style="position:absolute;left:0;top:526.3px;width:321px;height:52.8px;background:#fff;border-radius:13px;box-shadow:0 1px 4px rgba(0,0,0,.17)"></div><span style="position:absolute;left:45.40px;top:541px;line-height:20px;white-space:pre;font-family:'Liberation Sans',sans-serif;font-size:17.2px;font-weight:400;color:#454545;letter-spacing:-0.239px;">Files</span><svg style="position:absolute;left:15px;top:542.0999999999999px;overflow:visible;" width="23" height="23" viewBox="0 0 23 23"><rect x="0.8" y="2.4" width="17" height="20" rx="1.6" fill="#0f75bc"/><rect x="4" y="0.6" width="16.4" height="18.6" rx="1.2" fill="#d9d9d9" stroke="#0f75bc" stroke-width="1.3"/></svg><svg style="position:absolute;left:286.80px;top:542.70px;" width="25" height="25" viewBox="0 0 24 24"><path fill="#0f75bc" d="M16.59 8.59L12 13.17 7.41 8.59 6 10l6 6 6-6z"/></svg><div style="position:absolute;left:0;top:585.1px;width:321px;height:52.8px;background:#fff;border-radius:13px;box-shadow:0 1px 4px rgba(0,0,0,.17)"></div><span style="position:absolute;left:45.40px;top:600px;line-height:20px;white-space:pre;font-family:'Liberation Sans',sans-serif;font-size:17.2px;font-weight:400;color:#454545;letter-spacing:0.026px;">Variable explorer</span><svg style="position:absolute;left:15px;top:602.3000000000001px;overflow:visible;" width="23" height="23" viewBox="0 0 23 23"><rect x="0.6" y="0.6" width="21.8" height="18.4" rx="1" fill="#fff" stroke="#0f75bc" stroke-width="1.2"/><rect x="0.6" y="0.6" width="21.8" height="3.4" fill="#0f75bc"/><text x="11.5" y="15.2" text-anchor="middle" font-family="'Liberation Serif',serif" font-style="italic" font-weight="700" font-size="9.5" fill="#0f75bc">(x)</text></svg><svg style="position:absolute;left:286.80px;top:601.50px;" width="25" height="25" viewBox="0 0 24 24"><path fill="#0f75bc" d="M16.59 8.59L12 13.17 7.41 8.59 6 10l6 6 6-6z"/></svg><div style="position:absolute;left:0;top:643.8px;width:321px;height:52.8px;background:#fff;border-radius:13px;box-shadow:0 1px 4px rgba(0,0,0,.17)"></div><span style="position:absolute;left:45.40px;top:659px;line-height:20px;white-space:pre;font-family:'Liberation Sans',sans-serif;font-size:17.2px;font-weight:400;color:#454545;letter-spacing:0.256px;">Writers</span><svg style="position:absolute;left:15px;top:659.1999999999999px;overflow:visible;" width="23" height="23" viewBox="0 0 23 23"><path d="M0.6 13.6h20.8V7.4l-1.4-5c-.2-.8-1-1.1-1.7-.9L13.6 2.8V9.6H7V4.6L2.6 7.4c-.9.6-1.3 1.6-1.6 2.6z" fill="#0f75bc"/><rect x="5.6" y="1.6" width="8" height="8.4" fill="#e3ecf3" stroke="#0f75bc" stroke-width=".7"/><path d="M7 4.2h5.2M7 6h5.2M7 7.8h5.2" stroke="#0f75bc" stroke-width=".6"/><rect x="0.4" y="15.4" width="21.2" height="5.4" fill="#0f75bc"/></svg><svg style="position:absolute;left:286.80px;top:660.20px;" width="25" height="25" viewBox="0 0 24 24"><path fill="#0f75bc" d="M16.59 8.59L12 13.17 7.41 8.59 6 10l6 6 6-6z"/></svg><span style="position:absolute;left:18.20px;top:239px;line-height:20px;white-space:pre;font-family:'Liberation Sans',sans-serif;font-size:15.4px;font-weight:400;color:#444;letter-spacing:0.265px;">Unregistered</span><svg style="position:absolute;left:281.20px;top:228.40px;" width="26" height="26" viewBox="0 0 24 24"><path fill="#6b6b6b" d="M7 10l5 5 5-5z"/></svg><div style="position:absolute;left:18px;top:271.0px;width:286px;height:1px;background:#757575"></div><div style="position:absolute;left:18px;top:281.4px;width:286px;height:35.6px;border:1px solid #c9c9c9;border-radius:18px"></div><svg style="position:absolute;left:27.50px;top:286.90px;" width="23" height="23" viewBox="0 0 24 24"><path fill="#0f75bc" d="M15.5 14h-.79l-.28-.27C15.41 12.59 16 11.11 16 9.5 16 5.91 13.09 3 9.5 3S3 5.91 3 9.5 5.91 16 9.5 16c1.61 0 3.09-.59 4.23-1.57l.27.28v.79l5 4.99L20.49 19l-4.99-5zm-6 0C7.01 14 5 11.99 5 9.5S7.01 5 9.5 5 14 7.01 14 9.5 11.99 14 9.5 14z"/></svg><span style="position:absolute;left:58.80px;top:288px;line-height:20px;white-space:pre;font-family:'Liberation Sans',sans-serif;font-size:17.2px;font-weight:400;color:#757575;letter-spacing:-0.545px;">Search</span></div></div>
<div style="position:absolute;left:1898.3px;top:194.8px;width:7px;height:673px;background:#dcdcdc"></div>
<div style="position:absolute;left:1898.3px;top:208px;width:7px;height:582px;background:#b3b3b3;border-radius:3.5px"></div>
<div style="position:absolute;left:0px;top:884px;width:1916px;height:1px;background:#a9c0c0"></div>
<div style="position:absolute;left:1460.3px;top:560.8px;width:174.8px;height:185px;background:#fff;border-radius:4px;box-shadow:0 2px 6px rgba(0,0,0,.3),0 0 2px rgba(0,0,0,.15)"></div>
<div style="position:absolute;left:1460.3px;top:612px;width:174.8px;height:41.3px;background:#f4f4f4"></div>
<svg style="position:absolute;left:1473.8px;top:581px;overflow:visible;" width="19.4" height="20" viewBox="0 0 22.4 22"><g fill="none" stroke="#0f75bc" stroke-width="3.4"><path d="M0 5h3.2c3.6 0 5 2 7 6s3.4 6 7 6h1.6"/><path d="M0 17h3.2c3.6 0 5-2 7-6s3.4-6 7-6h1.6"/></g><path d="M16.6 0l5.6 5-5.6 5zM16.6 12l5.6 5-5.6 5z" fill="#0f75bc"/></svg>
<span style="position:absolute;left:1502.20px;top:581px;line-height:20px;white-space:pre;font-family:'Liberation Sans',sans-serif;font-size:15.4px;font-weight:400;color:#3a3a3a;letter-spacing:0.204px;">Transform</span>
<svg style="position:absolute;left:1471.40px;top:617.70px;" width="23.6" height="23.6" viewBox="0 0 24 24"><path fill="#0f75bc" d="M17 3H5c-1.11 0-2 .9-2 2v14c0 1.1.89 2 2 2h14c1.1 0 2-.9 2-2V7l-4-4zm-5 16c-1.66 0-3-1.34-3-3s1.34-3 3-3 3 1.34 3 3-1.34 3-3 3zm3-10H5V5h10v4z"/></svg>
<span style="position:absolute;left:1504.70px;top:622px;line-height:20px;white-space:pre;font-family:'Liberation Sans',sans-serif;font-size:15.4px;font-weight:400;color:#3a3a3a;letter-spacing:0.122px;">Save model</span>
<svg style="position:absolute;left:1471.40px;top:659.60px;" width="23.6" height="23.6" viewBox="0 0 24 24"><path fill="#0f75bc" d="M19 3H5c-1.1 0-2 .9-2 2v14c0 1.1.9 2 2 2h14c1.1 0 2-.9 2-2V5c0-1.1-.9-2-2-2zM9 17H7v-7h2v7zm4 0h-2V7h2v10zm4 0h-2v-4h2v4z"/></svg>
<span style="position:absolute;left:1504.90px;top:664px;line-height:20px;white-space:pre;font-family:'Liberation Sans',sans-serif;font-size:15.4px;font-weight:400;color:#3a3a3a;letter-spacing:0.199px;">Predict</span>
<svg style="position:absolute;left:1471.40px;top:700.70px;" width="23.6" height="23.6" viewBox="0 0 24 24"><path fill="#0f75bc" d="M17 3H5c-1.11 0-2 .9-2 2v14c0 1.1.89 2 2 2h14c1.1 0 2-.9 2-2V7l-4-4zm-5 16c-1.66 0-3-1.34-3-3s1.34-3 3-3 3 1.34 3 3-1.34 3-3 3zm3-10H5V5h10v4z"/></svg>
<span style="position:absolute;left:1504.70px;top:705px;line-height:20px;white-space:pre;font-family:'Liberation Sans',sans-serif;font-size:15.4px;font-weight:400;color:#3a3a3a;letter-spacing:0.212px;">Save artifact</span>
<div style="position:absolute;left:1465px;top:610px;width:135px;height:40.8px;border:4px solid #f7a80d;border-radius:9px"></div>
<div style="position:absolute;left:412.3px;top:88.2px;width:305.7px;height:47.6px;border:4.3px solid #f7a80d;border-radius:9px"></div>
<svg style="position:absolute;left:0;top:0;overflow:visible" width="1" height="1"><path d="M443.80 92.00 Q416.73 75.76 408.18 72.98 A20.0 20.0 0 1 0 408.18 111.02 Q416.73 108.24 443.80 92.00 Z" fill="#f7a80d"/><text x="407.0" y="100.0" text-anchor="middle" font-family="'Liberation Sans',sans-serif" font-size="22.3" fill="#fff">1</text></svg>
<svg style="position:absolute;left:0;top:0;overflow:visible" width="1" height="1"><path d="M535.80 290.00 Q508.73 273.76 500.18 270.98 A20.0 20.0 0 1 0 500.18 309.02 Q508.73 306.24 535.80 290.00 Z" fill="#f7a80d"/><text x="498.6" y="298.1" text-anchor="middle" font-family="'Liberation Sans',sans-serif" font-size="22.3" fill="#fff">2</text></svg>
<svg style="position:absolute;left:0;top:0;overflow:visible" width="1" height="1"><path d="M518.00 398.00 Q491.28 381.97 482.08 378.98 A20.0 20.0 0 1 0 482.08 417.02 Q491.28 414.03 518.00 398.00 Z" fill="#f7a80d"/><text x="480.4" y="406.1" text-anchor="middle" font-family="'Liberation Sans',sans-serif" font-size="22.3" fill="#fff">3</text></svg>
<svg style="position:absolute;left:0;top:0;overflow:visible" width="1" height="1"><path d="M440.40 325.90 Q412.97 309.44 405.08 306.88 A20.0 20.0 0 1 0 405.08 344.92 Q412.97 342.36 440.40 325.90 Z" fill="#f7a80d"/><text x="403.2" y="333.9" text-anchor="middle" font-family="'Liberation Sans',sans-serif" font-size="22.3" fill="#fff">4</text></svg>
<svg style="position:absolute;left:0;top:0;overflow:visible" width="1" height="1"><path d="M512.80 749.90 Q485.55 733.55 477.33 730.88 A20.0 20.0 0 1 0 477.33 768.92 Q485.55 766.25 512.80 749.90 Z" fill="#f7a80d"/><text x="475.4" y="757.9" text-anchor="middle" font-family="'Liberation Sans',sans-serif" font-size="22.3" fill="#fff">5</text></svg>
<svg style="position:absolute;left:0;top:0;overflow:visible" width="1" height="1"><path d="M1465.40 627.95 Q1436.85 610.82 1431.03 608.93 A20.0 20.0 0 1 0 1431.03 646.97 Q1436.85 645.08 1465.40 627.95 Z" fill="#f7a80d"/><text x="1429.3" y="636.0" text-anchor="middle" font-family="'Liberation Sans',sans-serif" font-size="22.3" fill="#fff">6</text></svg>
</body></html>
